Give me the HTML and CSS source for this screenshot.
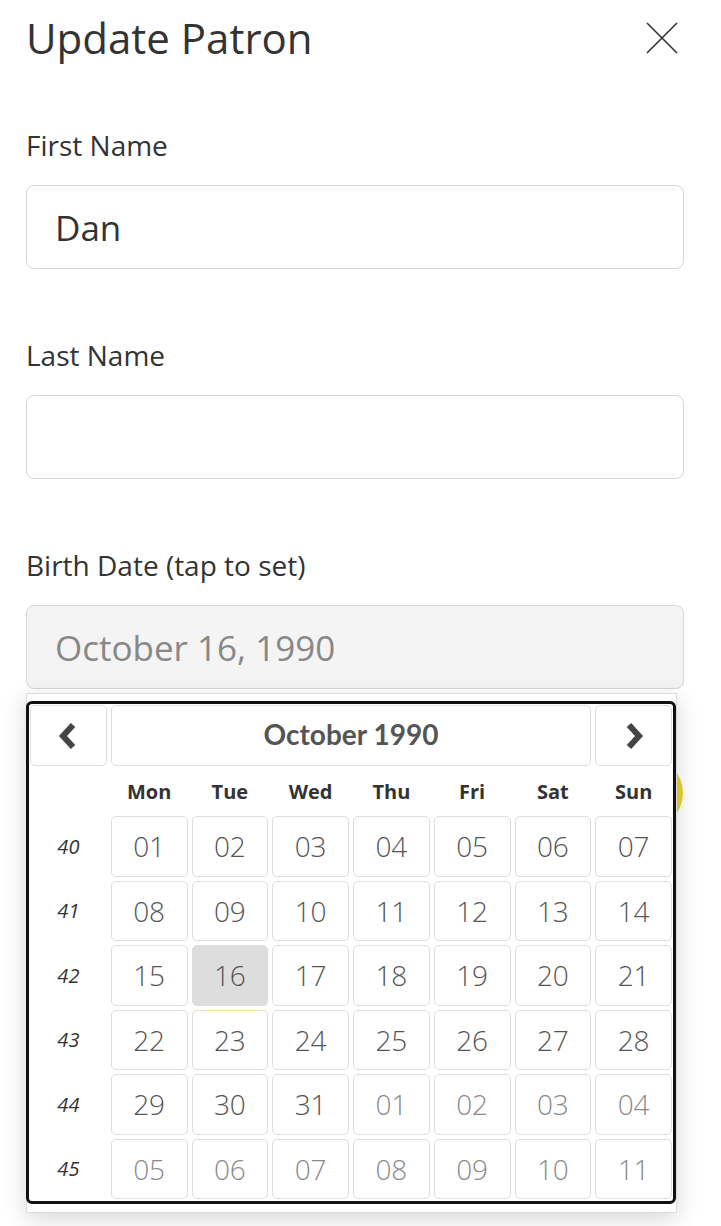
FILE: index.html
```html
<!DOCTYPE html>
<html lang="en">
<head>
    <meta charset="UTF-8">
    <meta name="viewport" content="width=device-width, initial-scale=1.0">
    <title>Update Patron</title>
    <link rel="stylesheet" href="styles.css">
</head>
<body>

<div class="modal">
    <div class="modal-head">
        <h1 class="modal-title">Update Patron</h1>
        <button type="button" class="close" aria-label="Close">
            <svg width="32" height="32" viewBox="0 0 32 32"><path d="M1 1L31 31M31 1L1 31" stroke="#333" stroke-width="1.6" fill="none"/></svg>
        </button>
    </div>

    <form class="patron-form">
        <div class="field">
            <label for="firstName">First Name</label>
            <input type="text" id="firstName" class="text-input" value="Dan">
        </div>

        <div class="field">
            <label for="lastName">Last Name</label>
            <input type="text" id="lastName" class="text-input" value="">
        </div>

        <div class="field birth">
            <label for="birthDate">Birth Date (tap to set)</label>
            <input type="text" id="birthDate" class="text-input readonly" value="October 16, 1990" readonly>

            <!-- botão amarelo que fica atrás do calendário -->
            <span class="fab"></span>

            <div class="picker">
                <div class="calendar">
                    <button type="button" class="cal-btn nav">
                        <svg width="20" height="28" viewBox="0 0 20 28"><path d="M15 3L5 14L15 25" stroke="#444" stroke-width="6" fill="none"/></svg>
                    </button>
                    <button type="button" class="cal-btn month">October 1990</button>
                    <button type="button" class="cal-btn nav">
                        <svg width="20" height="28" viewBox="0 0 20 28"><path d="M5 3L15 14L5 25" stroke="#444" stroke-width="6" fill="none"/></svg>
                    </button>

                    <span class="dow"></span>
                    <span class="dow">Mon</span>
                    <span class="dow">Tue</span>
                    <span class="dow">Wed</span>
                    <span class="dow">Thu</span>
                    <span class="dow">Fri</span>
                    <span class="dow">Sat</span>
                    <span class="dow">Sun</span>

                    <span class="week">40</span>
                    <button type="button" class="cal-btn day">01</button>
                    <button type="button" class="cal-btn day">02</button>
                    <button type="button" class="cal-btn day">03</button>
                    <button type="button" class="cal-btn day">04</button>
                    <button type="button" class="cal-btn day">05</button>
                    <button type="button" class="cal-btn day">06</button>
                    <button type="button" class="cal-btn day">07</button>

                    <span class="week">41</span>
                    <button type="button" class="cal-btn day">08</button>
                    <button type="button" class="cal-btn day">09</button>
                    <button type="button" class="cal-btn day">10</button>
                    <button type="button" class="cal-btn day">11</button>
                    <button type="button" class="cal-btn day">12</button>
                    <button type="button" class="cal-btn day">13</button>
                    <button type="button" class="cal-btn day">14</button>

                    <span class="week">42</span>
                    <button type="button" class="cal-btn day">15</button>
                    <button type="button" class="cal-btn day selected">16</button>
                    <button type="button" class="cal-btn day">17</button>
                    <button type="button" class="cal-btn day">18</button>
                    <button type="button" class="cal-btn day">19</button>
                    <button type="button" class="cal-btn day">20</button>
                    <button type="button" class="cal-btn day">21</button>

                    <span class="week">43</span>
                    <button type="button" class="cal-btn day">22</button>
                    <button type="button" class="cal-btn day below-selected">23</button>
                    <button type="button" class="cal-btn day">24</button>
                    <button type="button" class="cal-btn day">25</button>
                    <button type="button" class="cal-btn day">26</button>
                    <button type="button" class="cal-btn day">27</button>
                    <button type="button" class="cal-btn day">28</button>

                    <span class="week">44</span>
                    <button type="button" class="cal-btn day">29</button>
                    <button type="button" class="cal-btn day">30</button>
                    <button type="button" class="cal-btn day">31</button>
                    <button type="button" class="cal-btn day other">01</button>
                    <button type="button" class="cal-btn day other">02</button>
                    <button type="button" class="cal-btn day other">03</button>
                    <button type="button" class="cal-btn day other">04</button>

                    <span class="week">45</span>
                    <button type="button" class="cal-btn day other">05</button>
                    <button type="button" class="cal-btn day other">06</button>
                    <button type="button" class="cal-btn day other">07</button>
                    <button type="button" class="cal-btn day other">08</button>
                    <button type="button" class="cal-btn day other">09</button>
                    <button type="button" class="cal-btn day other">10</button>
                    <button type="button" class="cal-btn day other">11</button>
                </div>
            </div>
        </div>
    </form>
</div>

</body>
</html>
```

FILE: styles.css
```css
body {
    margin: 0;
    background-color: #ffffff;
    color: #333333;
    font-family: "Open Sans", "Liberation Sans", sans-serif;
}

.modal {
    padding: 13px 37px 0 26px;
}

.modal-head {
    display: flex;
    align-items: center;
    justify-content: space-between;
}

.modal-title {
    margin: 0;
    font-size: 42px;
    font-weight: 400;
    line-height: 50px;
    color: #333333;
}

.close {
    border: none;
    background: none;
    padding: 0;
    margin-right: 6px;
    display: flex;
    cursor: pointer;
}

.patron-form {
    padding-top: 63.5px;
}

.field {
    margin-bottom: 67.5px;
}

.field label {
    display: block;
    font-size: 28px;
    line-height: 36px;
    color: #333333;
    margin-bottom: 22.5px;
}

.text-input {
    box-sizing: border-box;
    display: block;
    width: 100%;
    height: 84px;
    border: 1px solid #d6d6d6;
    border-radius: 8px;
    padding: 0 28px;
    font-family: "Open Sans", "Liberation Sans", sans-serif;
    font-size: 35px;
    color: #333333;
    background-color: #ffffff;
    outline: none;
}

.text-input.readonly {
    background-color: #f4f4f4;
    color: #888888;
}

.birth {
    position: relative;
}

.fab {
    position: absolute;
    left: 585px;
    top: 210.5px;
    width: 72px;
    height: 72px;
    border-radius: 50%;
    background-color: #e8d42c;
}

.picker {
    position: relative;
    z-index: 2;
    box-sizing: border-box;
    width: 651px;
    margin-top: 4px;
    padding: 7px 0 8px 0;
    border: 1px solid #dddddd;
    background-color: #ffffff;
    box-shadow: 0 6px 22px rgba(0, 0, 0, 0.16);
}

.calendar {
    box-sizing: border-box;
    width: 650px;
    margin-left: -1px;
    border: 3px solid #111111;
    border-radius: 6px;
    padding: 1px 1px 2px 1px;
    display: grid;
    grid-template-columns: repeat(8, 1fr);
    grid-template-rows: 61px 42px repeat(6, 60.5px);
    gap: 4px;
}

.cal-btn {
    box-sizing: border-box;
    border: 1px solid #dddddd;
    border-radius: 5px;
    background-color: #ffffff;
    padding: 0;
    margin: 0;
    font-family: "Open Sans", "Liberation Sans", sans-serif;
    color: #555555;
    cursor: pointer;
    display: flex;
    align-items: center;
    justify-content: center;
}

.month {
    grid-column: span 6;
    font-family: "Lato", "Open Sans", sans-serif;
    font-size: 28px;
    font-weight: 700;
    color: #555555;
    padding-bottom: 3px;
}

.dow {
    display: flex;
    align-items: center;
    justify-content: center;
    font-size: 20px;
    font-weight: 700;
    color: #333333;
}

.week {
    display: flex;
    align-items: center;
    justify-content: center;
    font-size: 20px;
    font-style: italic;
    color: #333333;
}

.day {
    font-size: 28px;
    font-weight: 300;
}

.day.other {
    color: #8a8a8a;
}

.day.selected {
    background-color: #dddddd;
    border-color: #dddddd;
}

.day.below-selected {
    border-top-color: #f1e2a0;
}
```
